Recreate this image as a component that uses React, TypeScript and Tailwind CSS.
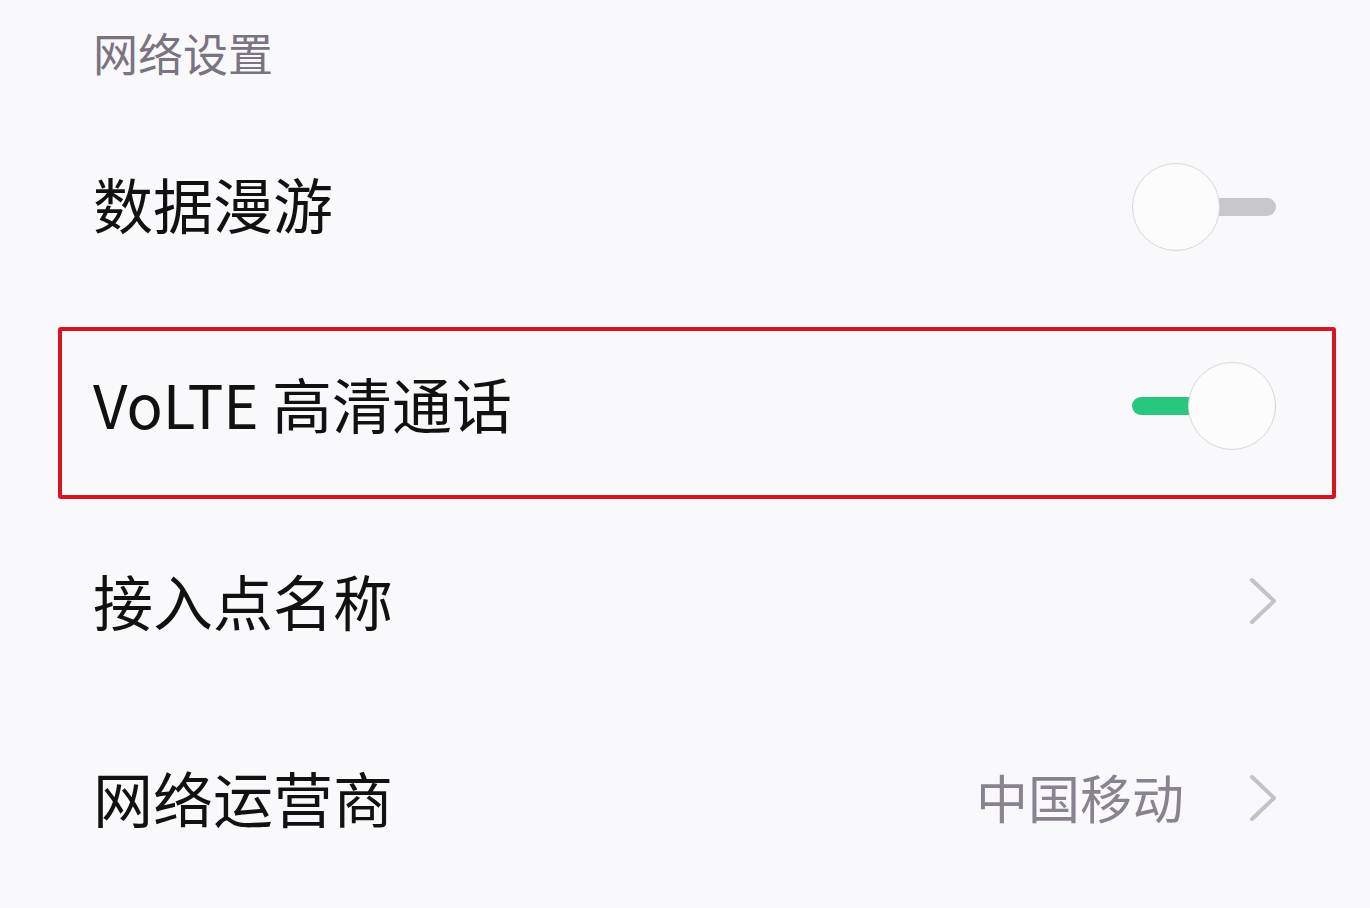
const font = { fontFamily: '"Noto Sans CJK SC", "Noto Sans", sans-serif' };

function Toggle({ on, className = "" }: { on: boolean; className?: string }) {
  return (
    <div className={"relative w-[144px] h-[88px] shrink-0 " + className}>
      <div
        className={
          "absolute left-0 right-0 top-[35px] h-[18px] rounded-full " +
          (on ? "bg-[#27c77f]" : "bg-[#c8c8ca]")
        }
      />
      <div
        className={
          "absolute top-0 w-[88px] h-[88px] rounded-full bg-[#fcfcfd] border border-[#d9d9dc] " +
          (on ? "right-0" : "left-0")
        }
      />
    </div>
  );
}

function Chevron() {
  return (
    <svg width="30" height="50" viewBox="0 0 30 50" className="shrink-0 mt-[2px]">
      <polyline
        points="4,4 26,25 4,46"
        fill="none"
        stroke="#c3c3c7"
        strokeWidth="4"
        strokeLinecap="round"
        strokeLinejoin="round"
      />
    </svg>
  );
}

export default function App() {
  return (
    <div className="w-[1370px] h-[908px] bg-[#f9f9fb] overflow-hidden" style={font}>
      <div className="h-[105px] flex items-center px-[93px]">
        <span className="text-[45px] leading-none text-[#7b7282]">网络设置</span>
      </div>

      <div className="h-[198px] flex items-center justify-between pl-[93px] pr-[94px] pb-[2px]">
        <span className="text-[60px] leading-none text-[#111111]">数据漫游</span>
        <Toggle on={false} className="mt-[8px]" />
      </div>

      <div className="h-[198px] pt-[24px] pb-[2px] pl-[58px] pr-[34px]">
        <div className="h-full border-4 border-[#d7141f] rounded-[3px] flex items-center justify-between pl-[31px] pr-[56px] pb-[20px]">
          <span className="text-[60px] leading-none text-[#111111]">VoLTE 高清通话</span>
          <Toggle on={true} className="mt-[6px]" />
        </div>
      </div>

      <div className="h-[197px] flex items-center justify-between pl-[93px] pr-[92px]">
        <span className="text-[60px] leading-none text-[#111111]">接入点名称</span>
        <Chevron />
      </div>

      <div className="h-[197px] flex items-center justify-between pl-[93px] pr-[92px]">
        <span className="text-[60px] leading-none text-[#111111]">网络运营商</span>
        <div className="flex items-center gap-[64px]">
          <span className="text-[52px] leading-none text-[#8a8290]">中国移动</span>
          <Chevron />
        </div>
      </div>
    </div>
  );
}
